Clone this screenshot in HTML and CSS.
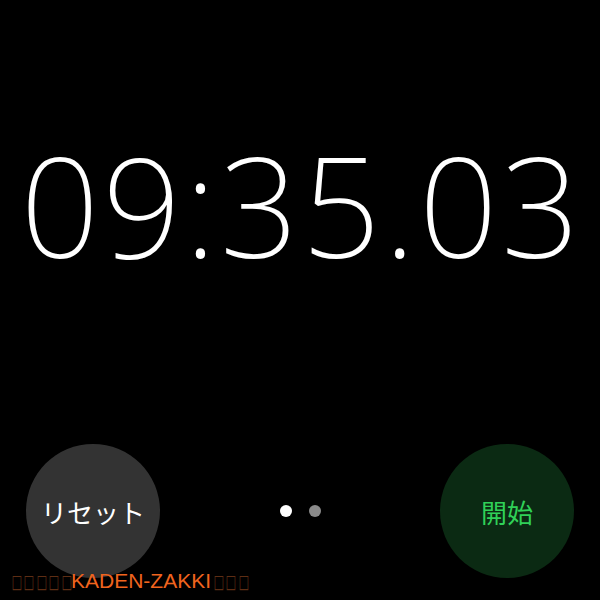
FILE: index.html
```html
<!DOCTYPE html>
<html>
<head>
<meta charset="utf-8">
<link rel="stylesheet" href="styles.css">
</head>
<body>
<div class="screen">
  <div class="time">09:35.03</div>
  <div class="controls">
    <div class="btn reset">リセット</div>
    <div class="dots"><span class="dot on"></span><span class="dot"></span></div>
    <div class="btn start">開始</div>
  </div>
  <div class="mark"><span class="b">□</span><span class="b">□</span><span class="b">□</span><span class="b">□</span><span class="b">□</span>KADEN-ZAKKI<span class="b">□</span><span class="b">□</span><span class="b">□</span></div>
</div>
</body>
</html>
```
FILE: styles.css
```css
html, body { margin: 0; padding: 0; background: #000; }
.screen {
  width: 600px; height: 600px; background: #000; position: relative; overflow: hidden;
  display: flex; flex-direction: column;
}
.time {
  margin-top: 124px;
  height: 160px;
  text-align: center;
  color: #fff;
  font-family: "Noto Sans", "Liberation Sans", sans-serif;
  font-weight: 200;
  font-size: 138px;
  line-height: 160px;
  letter-spacing: 3.4px;
  text-indent: 3.4px;
  white-space: nowrap;
}
.controls {
  margin-top: 160px;
  display: flex; align-items: center; justify-content: space-between;
  padding: 0 26px;
}
.btn {
  width: 134px; height: 134px; border-radius: 50%;
  display: flex; align-items: center; justify-content: center;
  font-family: "Noto Sans CJK JP", sans-serif;
  font-size: 26px;
}
.reset { background: #333333; color: #fff; }
.start { background: #0b2a13; color: #30d158; }
.dots { display: flex; gap: 17px; }
.dot { width: 12px; height: 12px; border-radius: 50%; background: #8a8a8a; }
.dot.on { background: #fff; }
.mark {
  position: absolute; left: 9px; top: 569px;
  font-family: "Liberation Sans", sans-serif; font-size: 21px; color: #f0641e;
  line-height: 24px;
  white-space: nowrap;
}
.b {
  display: inline-block; width: 12.4px; text-align: center;
  color: #5e2e14; font-family: "DejaVu Sans", sans-serif; font-size: 19px;
  transform: scaleX(0.6);
}
```
